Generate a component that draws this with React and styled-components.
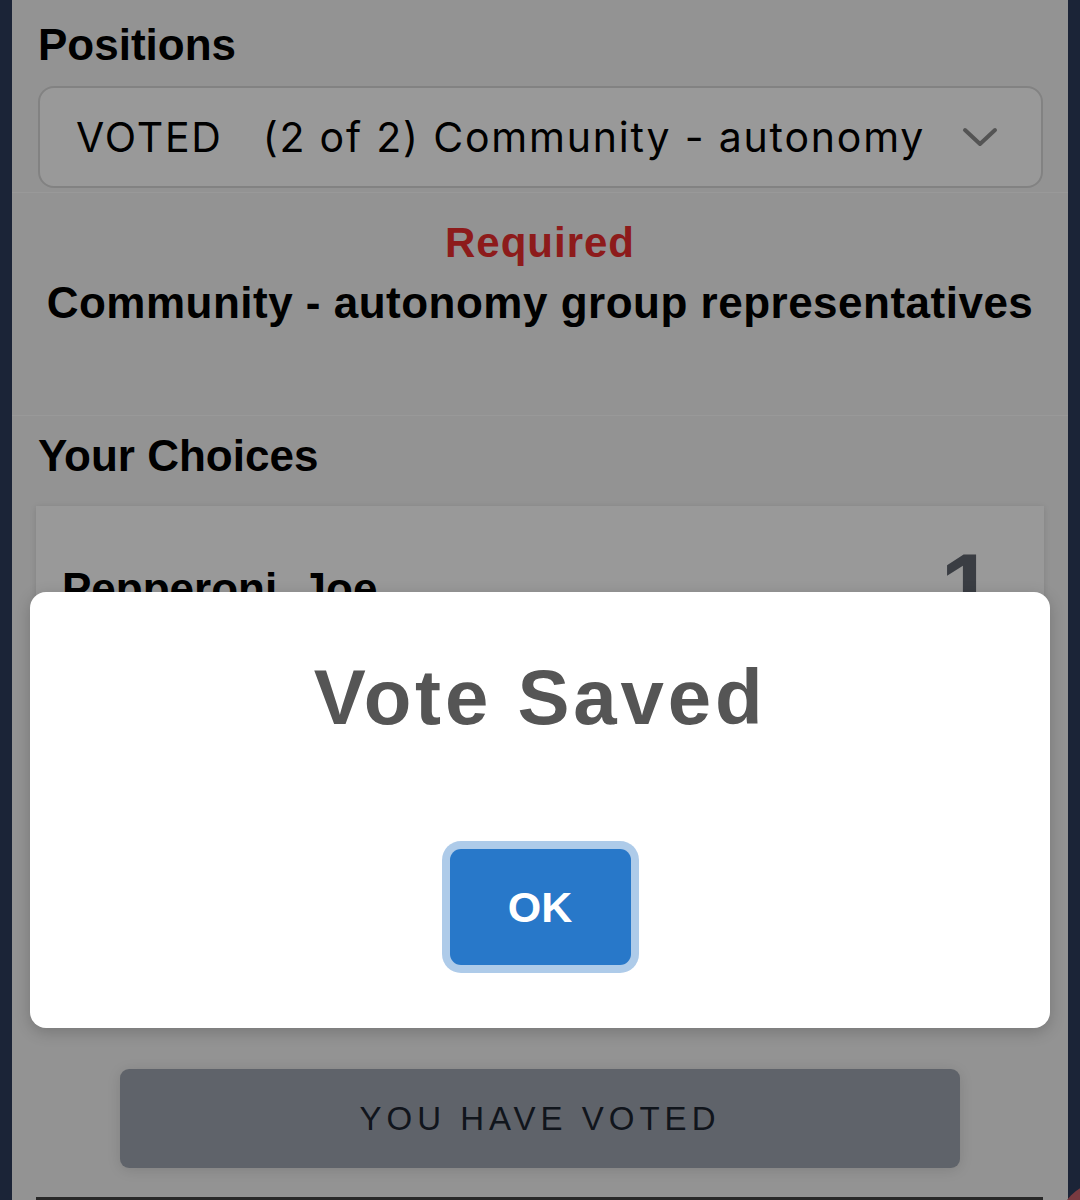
import React from "react";
import styled, { createGlobalStyle } from "styled-components";

const GlobalStyle = createGlobalStyle`
  html, body { margin: 0; padding: 0; background: #2d3c5d; }
  body { font-family: "Liberation Sans", Arial, sans-serif; }
  * { box-sizing: border-box; }
`;

const Frame = styled.div`
  position: relative;
  width: 1080px;
  height: 1200px;
  overflow: hidden;
  display: flex;
  justify-content: center;
  background: #2d3c5d;
`;

const Main = styled.main`
  width: 1056px;
  background: #f5f5f5;
  display: flex;
  flex-direction: column;
`;

const SectionTitle = styled.h2`
  margin: 0;
  font-size: 44px;
  line-height: 51px;
  font-weight: 700;
  color: #000;
`;

const PositionsBlock = styled.section`
  padding: 19px 25px 4px 26px;
  display: flex;
  flex-direction: column;
  gap: 16px;
`;

const Select = styled.div`
  height: 102px;
  border: 2px solid #d9d9d9;
  border-radius: 16px;
  background: #ffffff;
  display: flex;
  align-items: center;
  gap: 24px;
  padding: 0 43px 0 36px;
`;

const SelectText = styled.span`
  flex: 1;
  white-space: pre;
  font-family: "Inter", "Liberation Sans", sans-serif;
  font-size: 41px;
  letter-spacing: 1.8px;
  color: #000;
`;

const RequiredBlock = styled.section`
  border-top: 1px solid #ffffff;
  border-bottom: 1px solid #ffffff;
  padding: 26px 12px 87px;
  display: flex;
  flex-direction: column;
  align-items: center;
  gap: 10px;
`;

const RequiredLabel = styled.div`
  font-size: 42px;
  line-height: 48px;
  font-weight: 700;
  letter-spacing: 1px;
  color: #ec2e2e;
`;

const PositionName = styled.div`
  font-size: 44px;
  line-height: 51px;
  font-weight: 700;
  letter-spacing: 0.5px;
  color: #000;
  white-space: nowrap;
`;

const ChoicesBlock = styled.section`
  padding: 14px 24px 0 26px;
  display: flex;
  flex-direction: column;
  gap: 25px;
`;

const Card = styled.div`
  margin-left: -2px;
  height: 513px;
  background: #ffffff;
  box-shadow: 0 1px 6px rgba(0, 0, 0, 0.12);
  display: flex;
  justify-content: space-between;
  align-items: flex-start;
  padding: 34px 50px 0 26px;
`;

const CandidateName = styled.div`
  margin-top: 23px;
  font-size: 44px;
  line-height: 51px;
  font-weight: 700;
  color: #000;
`;

const Rank = styled.div`
  font-size: 96px;
  line-height: 1;
  font-weight: 700;
  color: #626771;
`;

const SubmitWrap = styled.div`
  padding: 50px 108px 0;
`;

const SubmitButton = styled.button`
  width: 100%;
  height: 99px;
  border: none;
  border-radius: 9px;
  background: #9fa6b1;
  box-shadow: 0 2px 14px rgba(0, 0, 0, 0.12);
  font-family: "Liberation Sans", Arial, sans-serif;
  font-size: 33px;
  letter-spacing: 5px;
  color: #1c2330;
  padding: 0;
`;

const FooterEdge = styled.div`
  margin: 29px 25px 0 24px;
  height: 8px;
  border-top: 3px solid #444444;
  background: #ffffff;
`;

const Fab = styled.div`
  position: absolute;
  left: 1058px;
  top: 1182px;
  width: 90px;
  height: 90px;
  border-radius: 50%;
  background: #cc616b;
`;

const Overlay = styled.div`
  position: absolute;
  inset: 0;
  background: rgba(0, 0, 0, 0.4);
  display: flex;
  flex-direction: column;
  padding: 592px 30px 0;
`;

const Dialog = styled.div`
  height: 436px;
  background: #ffffff;
  border-radius: 16px;
  box-shadow: 0 4px 16px rgba(0, 0, 0, 0.2);
  display: flex;
  flex-direction: column;
  align-items: center;
  padding-top: 60px;
`;

const DialogTitle = styled.h1`
  margin: 0;
  font-size: 78px;
  line-height: 90px;
  font-weight: 700;
  letter-spacing: 3.8px;
  color: #555555;
`;

const OkButton = styled.button`
  margin-top: 107px;
  width: 181px;
  height: 116px;
  border: none;
  border-radius: 11px;
  background: #2878c9;
  box-shadow: 0 0 0 8px #aecbe9;
  color: #ffffff;
  font-family: "Liberation Sans", Arial, sans-serif;
  font-size: 43px;
  font-weight: 700;
  padding: 0;
`;

const Chevron = () => (
  <svg width="36" height="22" viewBox="0 0 36 22" fill="none">
    <polyline
      points="3,4 18,18 33,4"
      stroke="#8c8c8c"
      strokeWidth="4"
      strokeLinecap="round"
      strokeLinejoin="round"
    />
  </svg>
);

export default function App() {
  return (
    <>
      <GlobalStyle />
      <Frame>
        <Main>
          <PositionsBlock>
            <SectionTitle>Positions</SectionTitle>
            <Select>
              <SelectText>{"VOTED   (2 of 2) Community - autonomy"}</SelectText>
              <Chevron />
            </Select>
          </PositionsBlock>
          <RequiredBlock>
            <RequiredLabel>Required</RequiredLabel>
            <PositionName>Community - autonomy group representatives</PositionName>
          </RequiredBlock>
          <ChoicesBlock>
            <SectionTitle>Your Choices</SectionTitle>
            <Card>
              <CandidateName>Pepperoni, Joe</CandidateName>
              <Rank>1</Rank>
            </Card>
          </ChoicesBlock>
          <SubmitWrap>
            <SubmitButton>YOU HAVE VOTED</SubmitButton>
          </SubmitWrap>
          <FooterEdge />
        </Main>
        <Fab />
        <Overlay>
          <Dialog>
            <DialogTitle>Vote Saved</DialogTitle>
            <OkButton>OK</OkButton>
          </Dialog>
        </Overlay>
      </Frame>
    </>
  );
}
